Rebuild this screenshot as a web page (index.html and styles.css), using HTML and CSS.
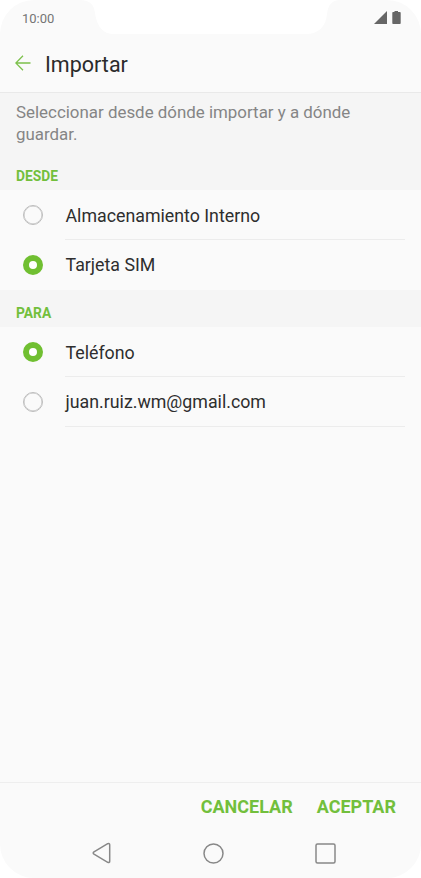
FILE: index.html
```
<!DOCTYPE html>
<html lang="es">
<head>
  <meta charset="UTF-8">
  <title>Importar</title>
  <meta name="viewport" content="width=device-width, initial-scale=1.0">
  <link rel="stylesheet" href="styles.css">
</head>
<body>

  <div class="phone">
    <svg class="notch" width="260" height="34" viewBox="0 0 260 34">
      <path d="M0 0C10 0 14 5 15 13C17 27 23 34 34 34H226C239 34 246 26 247 14C248 5 252 0 260 0Z" fill="#fff"/>
    </svg>

    <div class="status-bar">
      <span class="time">10:00</span>
      <svg class="status-icons" width="28" height="14" viewBox="0 0 28 14">
        <path d="M0 13L13 0V13Z" fill="#666"/>
        <path d="M18.300 2Q18.300 1 19 1H20.500V0H24V1H26Q26.700 1 26.700 2V12Q26.700 13 26 13H19Q18.300 13 18.300 12Z" fill="#666"/>
      </svg>
    </div>

    <div class="header">
      <svg class="back" width="16" height="16" viewBox="0 0 16 16">
        <path d="M15.500 8H1M8 .8L.8 8L8 15.200" fill="none" stroke="#7cc04b" stroke-width="1.300"/>
      </svg>
      <h1>Importar</h1>
    </div>

    <p class="intro">Seleccionar desde dónde importar y a dónde guardar.</p>

    <h2 class="from-title">DESDE</h2>
    <div class="options">
      <label class="option">
        <span class="radio"></span>
        <span class="option-text">Almacenamiento Interno</span>
      </label>
      <label class="option">
        <span class="radio checked"></span>
        <span class="option-text last">Tarjeta SIM</span>
      </label>
    </div>

    <h2 class="to-title">PARA</h2>
    <div class="options">
      <label class="option">
        <span class="radio checked"></span>
        <span class="option-text">Teléfono</span>
      </label>
      <label class="option">
        <span class="radio"></span>
        <span class="option-text">juan.ruiz.wm@gmail.com</span>
      </label>
    </div>

    <div class="actions">
      <button class="cancel-btn">CANCELAR</button>
      <button class="accept-btn">ACEPTAR</button>
    </div>

    <div class="nav-bar">
      <svg width="22" height="22" viewBox="0 0 22 22">
        <path d="M16.700 1.700L3 9.800Q1.400 11 3 12.200L16.700 20.300Q18.700 21 18.700 19.200V2.800Q18.700 1 16.700 1.700Z"/>
      </svg>
      <svg width="22" height="22" viewBox="0 0 22 22">
        <circle cx="10.500" cy="11.500" r="9.500"/>
      </svg>
      <svg width="22" height="22" viewBox="0 0 22 22">
        <rect x="2" y="2" width="19" height="19" rx="1.500"/>
      </svg>
    </div>
  </div>

</body>
</html>
```
FILE: styles.css
```
* {
  box-sizing: border-box;
}

body {
  font-family: Roboto, sans-serif;
  background-color: #fff;
  margin: 0;
}

.phone {
  position: relative;
  display: flex;
  flex-direction: column;
  height: 878px;
  background-color: #fafafa;
  border-radius: 34px;
  overflow: hidden;
}

.notch {
  position: absolute;
  top: 0;
  left: 80px;
}

.status-bar {
  display: flex;
  justify-content: space-between;
  height: 34px;
  padding: 11px 19px 0 22px;
}

.time {
  font-size: 13px;
  line-height: 15px;
  color: #757575;
}

.header {
  display: flex;
  align-items: center;
  height: 59px;
  padding: 0 15px;
  border-bottom: 1px solid #e9e9e9;
}

h1 {
  margin: 2px 0 0 14px;
  font-size: 21.5px;
  font-weight: 400;
  color: #2b2b2b;
}

.intro {
  margin: 0;
  height: 70px;
  padding: 8px 50px 0 16px;
  font-size: 16.9px;
  line-height: 22px;
  color: #858585;
  background-color: #f5f5f5;
}

h2 {
  margin: 0;
  padding-left: 16px;
  font-size: 13.8px;
  line-height: 16px;
  font-weight: 700;
  color: #72bf3c;
  background-color: #f5f5f5;
}

.from-title {
  height: 27px;
  padding-top: 5px;
}

.to-title {
  height: 37px;
  padding-top: 15px;
}

.option {
  display: flex;
  align-items: center;
  height: 50px;
  padding: 0 16px 0 22.5px;
}

.radio {
  width: 20px;
  height: 20px;
  border: 1px solid #bdbdbd;
  border-radius: 50%;
  box-shadow: inset 0 0 0 0.5px #bdbdbd;
}

.radio.checked {
  border: 6px solid #70bf31;
  background-color: #fff;
  box-shadow: none;
}

.option-text {
  flex: 1;
  height: 50px;
  margin-left: 22.5px;
  padding-left: 0.5px;
  border-bottom: 1px solid #ececec;
  font-size: 17.8px;
  line-height: 51px;
  color: #2e2e2e;
}

.option-text.last {
  border-bottom: none;
}

.option:last-child .radio {
  margin-bottom: 1px;
}

.option:last-child .option-text {
  line-height: 49px;
}

.actions {
  display: flex;
  justify-content: flex-end;
  gap: 24px;
  height: 48px;
  margin-top: auto;
  padding-right: 25px;
  border-top: 1px solid #eee;
}

button {
  padding: 0;
  border: none;
  background: none;
  font-family: inherit;
  font-size: 18px;
  font-weight: 700;
  color: #72bf3c;
  cursor: pointer;
}

.nav-bar {
  display: flex;
  justify-content: space-between;
  height: 48px;
  padding: 12px 85px 0 91px;
}

.nav-bar svg {
  fill: none;
  stroke: #888;
  stroke-width: 1.5px;
}
```
